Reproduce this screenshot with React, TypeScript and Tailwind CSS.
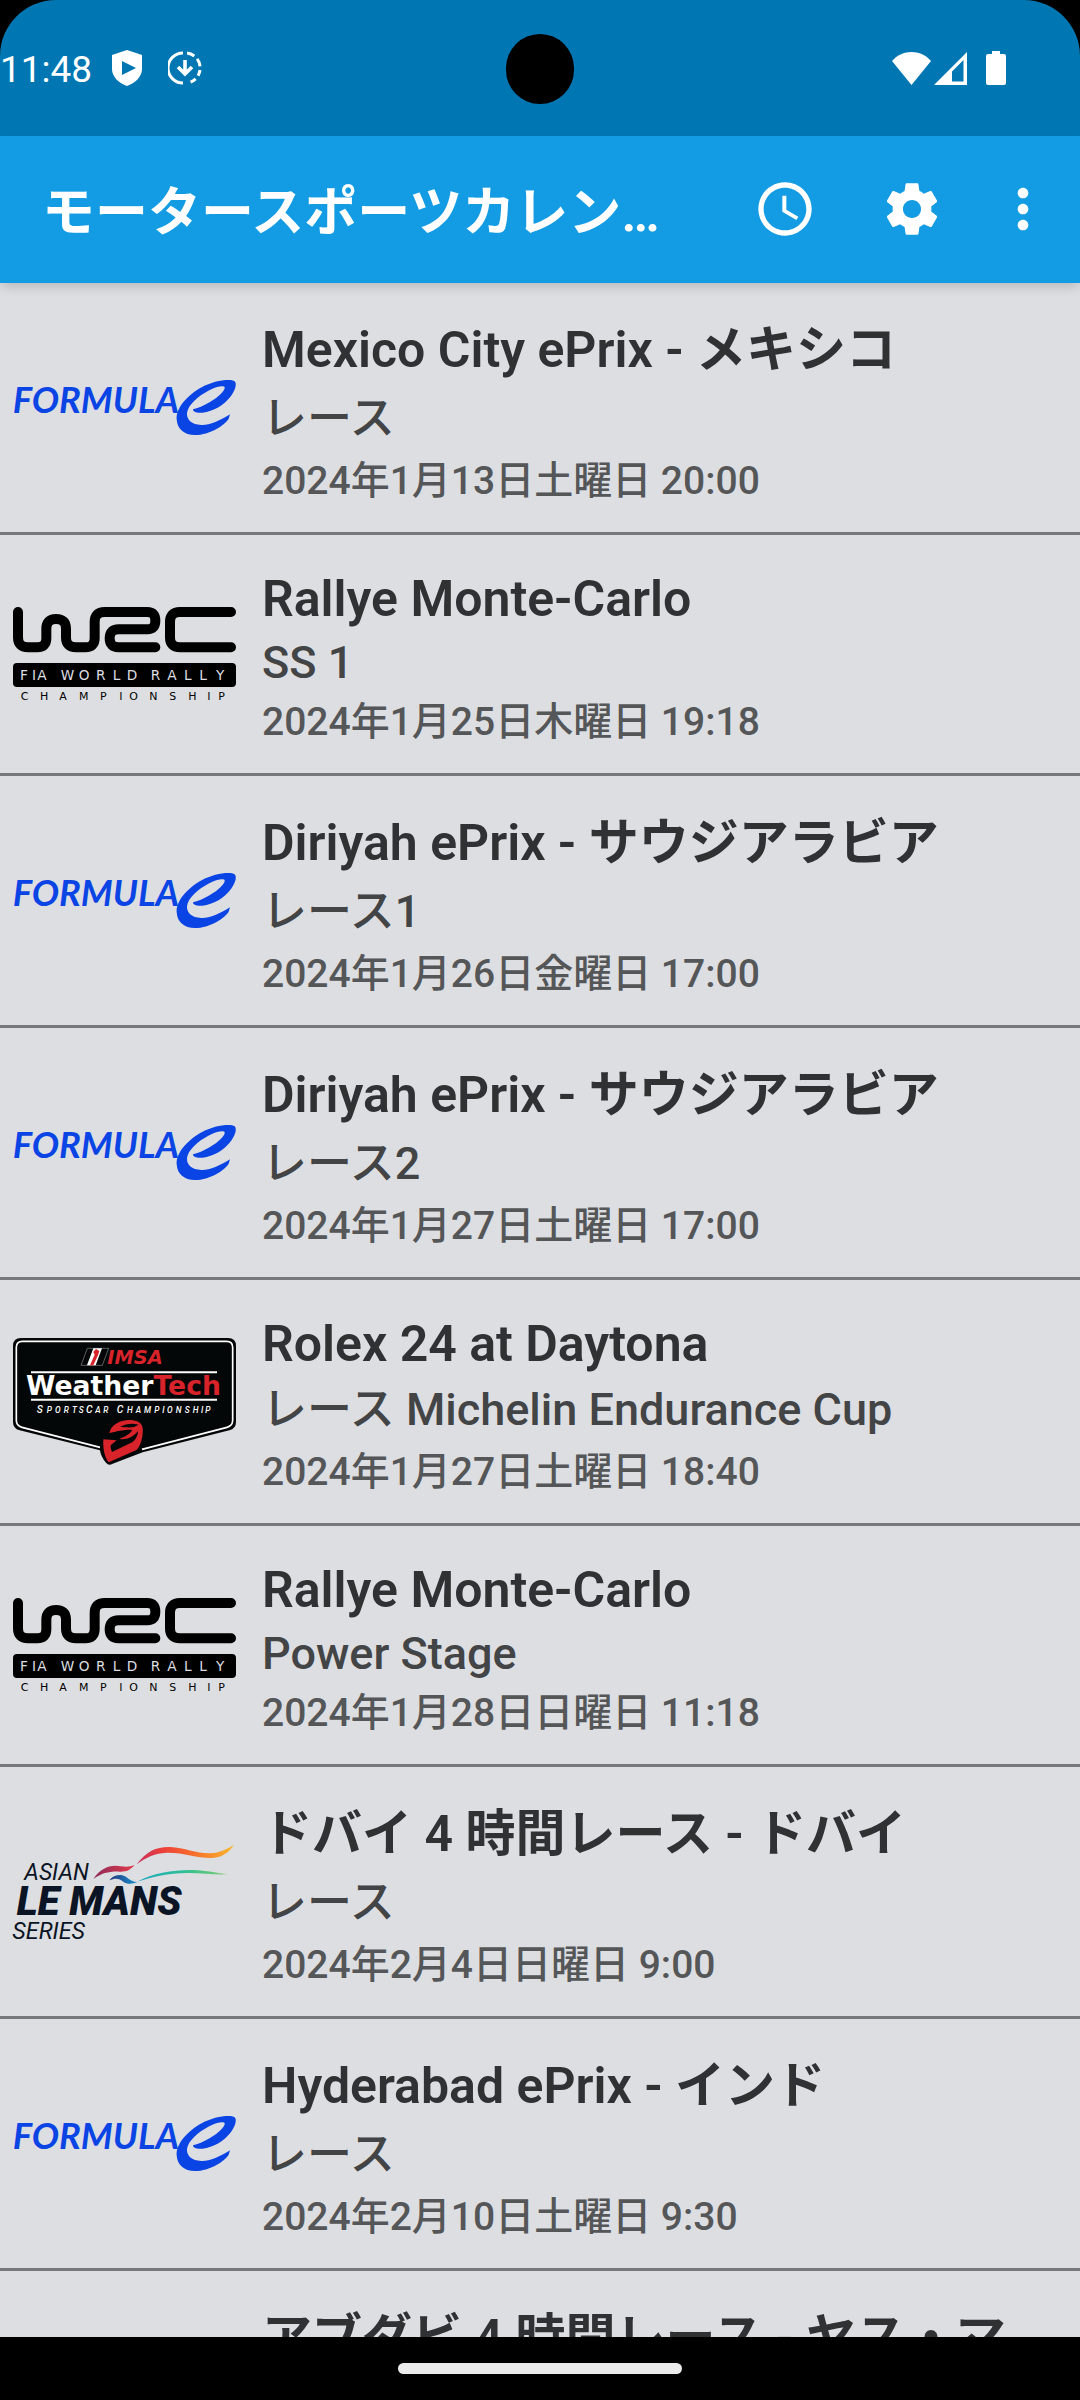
import { MdAccessTime, MdMoreVert } from "react-icons/md";

type Series = "fe" | "wrc" | "imsa" | "alms";

type RaceEvent = {
  series?: Series;
  title: string;
  session?: string;
  date?: string;
};

const events: RaceEvent[] = [
  { series: "fe", title: "Mexico City ePrix - メキシコ", session: "レース", date: "2024年1月13日土曜日 20:00" },
  { series: "wrc", title: "Rallye Monte-Carlo", session: "SS 1", date: "2024年1月25日木曜日 19:18" },
  { series: "fe", title: "Diriyah ePrix - サウジアラビア", session: "レース1", date: "2024年1月26日金曜日 17:00" },
  { series: "fe", title: "Diriyah ePrix - サウジアラビア", session: "レース2", date: "2024年1月27日土曜日 17:00" },
  { series: "imsa", title: "Rolex 24 at Daytona", session: "レース Michelin Endurance Cup", date: "2024年1月27日土曜日 18:40" },
  { series: "wrc", title: "Rallye Monte-Carlo", session: "Power Stage", date: "2024年1月28日日曜日 11:18" },
  { series: "alms", title: "ドバイ 4 時間レース - ドバイ", session: "レース", date: "2024年2月4日日曜日 9:00" },
  { series: "fe", title: "Hyderabad ePrix - インド", session: "レース", date: "2024年2月10日土曜日 9:30" },
  { title: "アブダビ 4 時間レース - ヤス・マ" },
];

// Lines with Japanese glyphs are a little taller than Latin-only ones
const hasJapanese = (text: string) => /[\u3040-\u30ff\u4e00-\u9fff]/.test(text);

const FormulaELogo = () => (
  <svg viewBox="39 60 669 165" className="w-full overflow-visible" role="img" aria-label="Formula E">
    <text x="38" y="160" fontSize="109" className="fill-[#0a44e4] font-['Lato',sans-serif] font-bold italic">
      FORMULA
    </text>
    <path
      className="fill-[#0a44e4]"
      d="M690 163C660 182 628 196 604 195C575 194 560 180 561 160C563 135 595 108 625 92C650 79 672 76 674 82C676 92 655 112 630 126C612 137 592 145 579 148C578 156 592 160 608 158C640 155 672 135 690 112C705 94 712 72 704 64C690 55 640 62 605 82C560 107 528 145 530 178C532 208 552 225 585 225C630 225 675 195 686 176Z"
    />
  </svg>
);

const WrcLogo = () => (
  <svg viewBox="39 51 669 280" className="w-full overflow-visible" role="img" aria-label="WRC">
    <g fill="none" stroke="#000" strokeWidth="30" strokeLinecap="round">
      <path d="M54 66V142Q54 172 84 172H112Q139 172 139 145V116Q139 87 168 87Q198 87 198 116V142Q198 172 228 172H256Q284 172 284 144V96Q284 66 314 66H442Q466 66 466 92Q466 118 442 118H356Q329 118 329 145Q329 172 356 172H466" />
      <path d="M693 66H540Q510 66 510 96V142Q510 172 540 172H693" />
    </g>
    <rect x="39" y="219" width="669" height="72" rx="12" />
    <g className="font-['DejaVu_Sans',sans-serif]">
      <text y="270" x="60 96 112 150 182 236 288 338 380 420 452 502 552 598 648" fontSize="41" fill="#dddee2">
        FIA WORLD RALLY
      </text>
      <text y="330" x="62 120 178 237 300 358 388 448 508 565 622 655" fontSize="33">
        CHAMPIONSHIP
      </text>
    </g>
  </svg>
);

const ImsaLogo = () => (
  <svg viewBox="39 54 669 381" className="w-full overflow-visible" role="img" aria-label="IMSA WeatherTech">
    <path
      fill="#040707"
      d="M63 54H684Q708 54 708 78V306Q708 326 688 331L428 397L338 431Q326 438 318 428Q302 410 300 391L59 331Q39 326 39 306V78Q39 54 63 54Z"
    />
    <path
      fill="none"
      stroke="#fff"
      strokeWidth="5"
      d="M300 382L66 322Q49 318 49 301V82Q49 64 67 64H680Q698 64 698 82V301Q698 318 681 322L426 388"
    />
    <path d="M262 85H326L307 136H243Z" fill="none" stroke="#888" strokeWidth="2" />
    <path d="M280 85H306L287 136H261Z" fill="#fff" />
    <path d="M288 87L298 93L294 106L280 136H270L284 104L280 96Z" fill="#d8232a" />
    <text x="322" y="133" fontSize="58" fill="#d8232a" className="font-['DejaVu_Sans',sans-serif] font-bold italic">
      IMSA
    </text>
    <path d="M93 157H651M93 239H651" stroke="#fff" strokeWidth="6" />
    <text x="78" y="224" fontSize="80" fill="#fff" className="font-['DejaVu_Sans',sans-serif] font-bold">
      Weather<tspan fill="#d8232a">Tech</tspan>
    </text>
    <g fill="#fff" className="font-['Roboto',sans-serif] font-medium italic">
      <text y="279" x="110 140 165 191 216 236 258 286 310" fontSize="25">
        <tspan fontSize="31">S</tspan>PORTS<tspan fontSize="31">C</tspan>AR
      </text>
      <text y="279" x="350 381 407 432 463 487 501 527 554 578 603 616" fontSize="25">
        <tspan fontSize="31">C</tspan>HAMPIONSHIP
      </text>
    </g>
    {/* driver's helmet */}
    <path
      fill="#d8232a"
      d="M328 340C332 314 362 298 394 300C420 302 432 316 428 338C427 360 420 380 408 391L326 427C316 414 308 392 310 358L350 361L332 376Q330 384 336 396L398 366C408 358 414 346 414 334C398 352 378 361 358 357C374 350 392 342 396 330C380 328 350 334 328 340Z"
    />
    <path d="M360 320Q386 306 416 314Q402 324 380 322Q370 322 360 320Z" fill="#040707" />
  </svg>
);

const AsianLeMansLogo = () => (
  <svg viewBox="39 45 669 286" className="w-full overflow-visible" role="img" aria-label="Asian Le Mans Series">
    <defs>
      <linearGradient id="alms-warm" gradientUnits="userSpaceOnUse" x1="410" y1="0" x2="700" y2="0">
        <stop offset="0" stopColor="#c82f5c" />
        <stop offset="0.3" stopColor="#ee4338" />
        <stop offset="0.65" stopColor="#f7782a" />
        <stop offset="1" stopColor="#f8b830" />
      </linearGradient>
      <linearGradient id="alms-red" gradientUnits="userSpaceOnUse" x1="280" y1="0" x2="400" y2="0">
        <stop offset="0" stopColor="#8c2a58" />
        <stop offset="1" stopColor="#e03a4c" />
      </linearGradient>
      <linearGradient id="alms-blue" gradientUnits="userSpaceOnUse" x1="328" y1="0" x2="412" y2="0">
        <stop offset="0" stopColor="#27397c" />
        <stop offset="1" stopColor="#1590d0" />
      </linearGradient>
      <linearGradient id="alms-green" gradientUnits="userSpaceOnUse" x1="412" y1="0" x2="690" y2="0">
        <stop offset="0" stopColor="#22a8c4" />
        <stop offset="0.5" stopColor="#2cbf94" />
        <stop offset="1" stopColor="#86cc6c" />
      </linearGradient>
    </defs>
    <path fill="url(#alms-warm)" d="M410 106C440 66 470 53 510 54C555 56 590 74 630 73C660 72 680 60 702 48C684 74 662 87 632 87C590 87 550 70 500 71C465 73 440 84 410 106Z" />
    <path fill="url(#alms-red)" d="M280 150C298 122 322 110 346 110C366 111 382 117 404 108C390 124 378 129 358 128C328 127 306 132 280 150Z" />
    <path fill="url(#alms-blue)" d="M328 154C336 142 350 137 364 138C384 142 388 158 412 159C396 166 380 166 370 158C358 148 346 146 328 154Z" />
    <path fill="url(#alms-green)" d="M412 158C460 132 520 122 580 123C620 124 650 132 684 136C640 138 600 131 560 132C505 132 460 144 412 158Z" />
    <g fill="#0b1424" className="font-['Roboto',sans-serif] italic">
      <text x="73" y="154" fontSize="69">ASIAN</text>
      <text x="50" y="258" fontSize="120" className="font-black">LE MANS</text>
      <text x="37" y="330" fontSize="70">SERIES</text>
    </g>
  </svg>
);

const logos = {
  fe: FormulaELogo,
  wrc: WrcLogo,
  imsa: ImsaLogo,
  alms: AsianLeMansLogo,
};

const StatusBar = () => (
  <div className="bg-black">
    <div className="relative flex h-[136px] items-center justify-between rounded-t-[56px] bg-[#0076b3] pr-[74px] text-white">
      <div className="flex items-center">
        <span className="pt-[4px] text-[37px] leading-[44px]">11:48</span>
        <svg viewBox="0 0 30 36" className="ml-[20px] h-[36px] w-[30px]" fill="currentColor" aria-hidden="true">
          <path fillRule="evenodd" d="M15 0L30 5V19C30 27 23 33 15 36C7 33 0 27 0 19V5ZM10 11V25L24 18Z" />
        </svg>
        <svg viewBox="0 0 34 34" className="ml-[26px] h-[34px] w-[34px]" fill="none" stroke="currentColor" strokeWidth="3" aria-hidden="true">
          <path d="M15 2A15 15 0 0 0 15 32" />
          <path d="M19 2A15 15 0 0 1 32 19" strokeDasharray="8 4" />
          <path d="M32 19A15 15 0 0 1 19 32" strokeDasharray="6 4" />
          <path d="M17 9V23M10 16L17 23L24 16" strokeWidth="3.6" />
        </svg>
      </div>
      <div className="absolute top-[34px] left-1/2 h-[70px] w-[68px] -translate-x-1/2 rounded-full bg-black" />
      <div className="flex items-center">
        <svg viewBox="0 0 39 33" className="h-[33px] w-[39px]" fill="currentColor" aria-hidden="true">
          <path d="M19.5 33L0 9C10-3 29-3 39 9Z" />
        </svg>
        <svg viewBox="0 0 33 33" className="ml-[3px] h-[33px] w-[33px]" fill="currentColor" aria-hidden="true">
          <path fillRule="evenodd" d="M33 0V33H0ZM29.5 8L18 19.5V29.5H29.5Z" />
        </svg>
        <svg viewBox="0 0 20 34" className="ml-[19px] h-[34px] w-[20px]" fill="currentColor" aria-hidden="true">
          <path d="M6 0H14V3H18Q20 3 20 5V32Q20 34 18 34H2Q0 34 0 32V5Q0 3 2 3H6Z" />
        </svg>
      </div>
    </div>
  </div>
);

const AppBar = () => (
  <header className="relative flex h-[147px] items-center bg-[#139ce4] pr-[10px] pb-[2px] pl-[42px] text-white shadow-[0_6px_10px_-2px_rgba(0,0,0,0.16)]">
    <h1 className="mr-6 min-w-0 flex-1 truncate pt-[9px] text-[53px] leading-[72px] font-semibold">モータースポーツカレンダー</h1>
    <button type="button" aria-label="時刻" className="flex h-[126px] w-[127px] items-center justify-center">
      <MdAccessTime className="size-[64px]" />
    </button>
    <button type="button" aria-label="設定" className="flex h-[126px] w-[127px] items-center justify-center">
      <svg viewBox="0 0 24 24" className="size-[62px]" fill="currentColor" aria-hidden="true">
        <path d="M19.43 12.98c.04-.32.07-.64.07-.98s-.03-.66-.07-.98l2.11-1.65c.19-.15.24-.42.12-.64l-2-3.46c-.12-.22-.39-.3-.61-.22l-2.49 1c-.52-.4-1.08-.73-1.69-.98l-.38-2.65C14.46 2.18 14.25 2 14 2h-4c-.25 0-.46.18-.49.42l-.38 2.65c-.61.25-1.17.59-1.69.98l-2.49-1c-.23-.09-.49 0-.61.22l-2 3.46c-.13.22-.07.49.12.64l2.11 1.65c-.04.32-.07.65-.07.98s.03.66.07.98l-2.11 1.65c-.19.15-.24.42-.12.64l2 3.46c.12.22.39.3.61.22l2.49-1c.52.4 1.08.73 1.69.98l.38 2.65c.03.24.24.42.49.42h4c.25 0 .46-.18.49-.42l.38-2.65c.61-.25 1.17-.59 1.69-.98l2.49 1c.23.09.49 0 .61-.22l2-3.46c.12-.22.07-.49-.12-.64l-2.11-1.65zM12 15.5c-1.93 0-3.5-1.57-3.5-3.5s1.57-3.5 3.5-3.5 3.5 1.57 3.5 3.5-1.57 3.5-3.5 3.5z" />
      </svg>
    </button>
    <button type="button" aria-label="その他" className="flex h-[126px] w-[95px] items-center justify-center">
      <MdMoreVert className="size-[64px]" />
    </button>
  </header>
);

const EventRow = ({ series, title, session, date }: RaceEvent) => {
  const Logo = series ? logos[series] : null;

  return (
    <li className="flex items-center border-b-[3px] border-[#77787b] pt-[28px] pr-[13px] pb-[19px] pl-[13px]">
      <div className="mr-[26px] -mt-[28px] -mb-[19px] flex w-[223px] shrink-0 items-center">{Logo && <Logo />}</div>
      <div className="min-w-0 flex-1 font-medium">
        <h2 className={`text-[50px] font-semibold text-[#303133] ${hasJapanese(title) ? "leading-[78px]" : "leading-[72px]"}`}>{title}</h2>
        {session && (
          <p className={`text-[45px] text-[#434446] ${hasJapanese(session) ? "leading-[60px]" : "leading-[55px]"}`}>{session}</p>
        )}
        {date && <p className="text-[39px] leading-[64px] text-[#555658]">{date}</p>}
      </div>
    </li>
  );
};

const App = () => {
  return (
    <div className="flex h-screen flex-col bg-[#dddee2] font-['Roboto','Noto_Sans_CJK_JP',sans-serif]" lang="ja">
      <StatusBar />
      <AppBar />
      <ul className="min-h-0 flex-1 overflow-y-auto [scrollbar-width:none]">
        {events.map((event, index) => (
          <EventRow key={index} {...event} />
        ))}
      </ul>
      <div className="flex h-[63px] shrink-0 items-center justify-center bg-black">
        <div className="h-[11px] w-[284px] rounded-full bg-[#ebebeb]" />
      </div>
    </div>
  );
};

export default App;
